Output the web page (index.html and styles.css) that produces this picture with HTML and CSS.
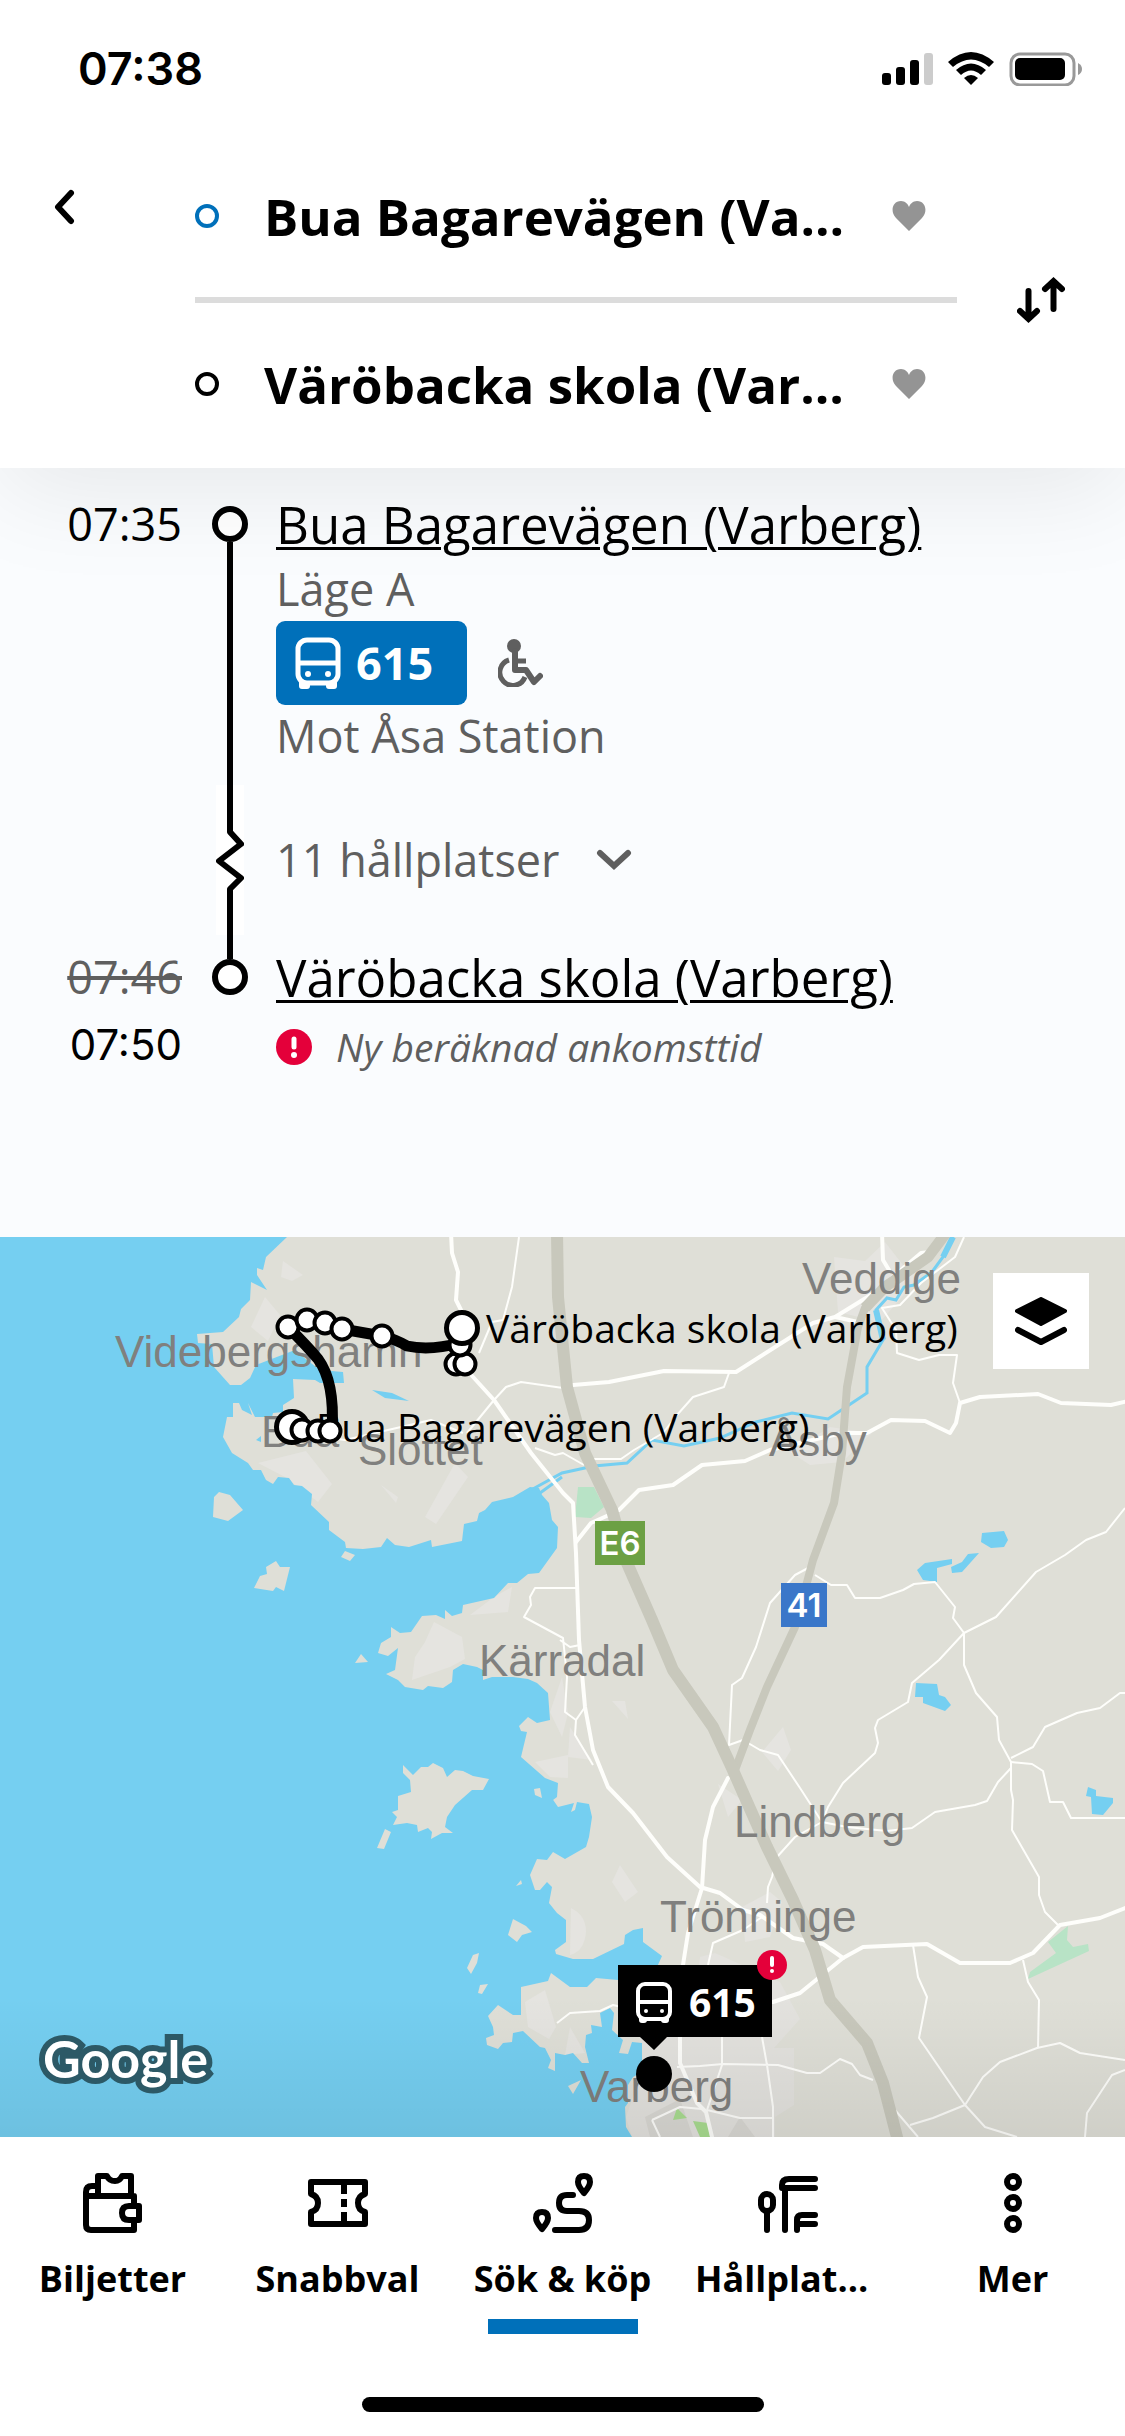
FILE: index.html
```
<!DOCTYPE html>
<html lang="sv">
<head>
    <meta charset="UTF-8">
    <meta name="viewport" content="width=device-width, initial-scale=1.0">
    <title>Sök &amp; köp</title>
    <link rel="stylesheet" href="styles.css">
</head>
<body>

    <div class="status-bar">
        <span class="clock">07:38</span>
        <svg width="200" height="34" viewBox="0 0 200 34">
            <rect x="0" y="21" width="9" height="12" rx="3"/>
            <rect x="14" y="15" width="9" height="18" rx="3"/>
            <rect x="28" y="8" width="9" height="25" rx="3"/>
            <rect x="42" y="1" width="9" height="32" rx="3" fill="#ccc"/>
            <path d="M66 10 L71 15 Q89 0 107 15 L112 10 Q89 -10 66 10 Z"/>
            <path d="M74 18 L79 23 Q89 14 99 23 L104 18 Q89 5 74 18 Z"/>
            <path d="M82 26 Q89 20 96 26 L89 33 Z"/>
            <rect x="129" y="2" width="63" height="31" rx="9" fill="none" stroke="#999" stroke-width="3"/>
            <rect x="133" y="6" width="50" height="22" rx="5"/>
            <path d="M196 11 Q200 13 200 17 Q200 21 196 23 Z" fill="#999"/>
        </svg>
    </div>

    <header class="search-header">
        <button class="back" aria-label="Tillbaka">
            <svg width="24" height="36" viewBox="0 0 24 36"><path d="M19 4 L6 18 L19 32" fill="none" stroke="#000" stroke-width="6" stroke-linecap="round" stroke-linejoin="round"/></svg>
        </button>
        <div class="places">
            <div class="place">
                <span class="dot dot-from"></span>
                <button class="place-name">Bua Bagarevägen (Varberg)</button>
                <button class="heart" aria-label="Spara från">
                    <svg width="34" height="30" viewBox="0 0 34 30"><path d="M17 30 L4 17 C-2 11 0 0 9 0 C13 0 16 3 17 6 C18 3 21 0 25 0 C34 0 36 11 30 17 Z"/></svg>
                </button>
            </div>
            <div class="divider"></div>
            <div class="place">
                <span class="dot"></span>
                <button class="place-name">Väröbacka skola (Varberg)</button>
                <button class="heart" aria-label="Spara till">
                    <svg width="34" height="30" viewBox="0 0 34 30"><path d="M17 30 L4 17 C-2 11 0 0 9 0 C13 0 16 3 17 6 C18 3 21 0 25 0 C34 0 36 11 30 17 Z"/></svg>
                </button>
            </div>
        </div>
        <button class="swap" aria-label="Byt riktning">
            <svg width="48" height="48" viewBox="0 0 48 48"><path d="M11.500 15 V42 M3 35 L11.500 43 L20 35 M36.500 33 V6 M28 13 L36.500 5 L45 13" fill="none" stroke="#000" stroke-width="6" stroke-linecap="round"/></svg>
        </button>
    </header>

    <main class="trip">
        <div class="leg">
            <div class="times"><span class="time">07:35</span></div>
            <div class="rail">
                <span class="ring ring-start"></span>
                <span class="line line-grow"></span>
                <svg class="zigzag" width="28" height="150" viewBox="0 0 28 150"><rect width="28" height="150" fill="#fff"/><path d="M14 0 V47 L25 59 L3 76 L25 93 L14 104 V150" fill="none" stroke="#000" stroke-width="6" stroke-linejoin="round"/></svg>
                <span class="line line-end"></span>
            </div>
            <div class="stop">
                <a class="stop-name" href="#">Bua Bagarevägen (Varberg)</a>
                <span class="platform">Läge A</span>
                <div class="ride">
                    <span class="bus-line">
                        <svg width="46" height="52" viewBox="0 0 46 52"><rect x="3" y="3" width="40" height="43" rx="9" fill="none" stroke="#fff" stroke-width="5"/><path d="M3 26 H43" stroke="#fff" stroke-width="5"/><circle cx="13" cy="37" r="3" fill="#fff"/><circle cx="33" cy="37" r="3" fill="#fff"/><path d="M4 44 H15 V49 Q15 52 12 52 H7 Q4 52 4 49 Z M31 44 H42 V49 Q42 52 39 52 H34 Q31 52 31 49 Z" fill="#fff"/></svg>
                        615
                    </span>
                    <svg width="45" height="48" viewBox="0 0 45 48" fill="none" stroke="#5f5f5f" stroke-width="5"><circle cx="16" cy="7" r="7" fill="#5f5f5f" stroke="none"/><path d="M17 12 V31 H28 L36 43 L42 37" stroke-width="6" stroke-linecap="round" stroke-linejoin="round"/><path d="M18 22 H28"/><path d="M11 21 A13 13 0 1 0 27 38"/></svg>
                </div>
                <span class="direction">Mot Åsa Station</span>
                <button class="stops-toggle">11 hållplatser
                    <svg width="36" height="22" viewBox="0 0 36 22"><path d="M4 4 L18 17 L32 4" fill="none" stroke="#5f5f5f" stroke-width="6" stroke-linecap="round"/></svg>
                </button>
            </div>
        </div>
        <div class="leg">
            <div class="times"><s class="time">07:46</s><span class="time-new">07:50</span></div>
            <div class="rail">
                <span class="line line-in"></span>
                <span class="ring"></span>
            </div>
            <div class="stop">
                <a class="stop-name" href="#">Väröbacka skola (Varberg)</a>
                <div class="notice">
                    <svg width="36" height="36" viewBox="0 0 36 36"><circle cx="18" cy="18" r="18" fill="#e4003a"/><path d="M18 10 V18" stroke="#fff" stroke-width="5" stroke-linecap="round"/><circle cx="18" cy="26" r="3" fill="#fff"/></svg>
                    <em>Ny beräknad ankomsttid</em>
                </div>
            </div>
        </div>
    </main>

    <section class="map">
        <svg class="map-canvas" viewBox="0 0 1125 900">
            <defs>
                <linearGradient id="fade" x1="0" y1="0" x2="0" y2="1">
                    <stop offset="0" stop-opacity="0"/>
                    <stop offset="1" stop-opacity="0.070"/>
                </linearGradient>
            </defs>
            <rect width="1125" height="900" fill="#dfdfd7"/>

            <!-- built-up areas -->
            <g fill="#e5e4e0">
                <path d="M283 24 L303 38 L292 44 L281 40 Z M265 60 L280 78 L268 104 L251 90 Z"/>
                <path d="M258 226 L306 214 L332 247 L318 265 L285 240 Z M455 226 L468 240 L436 287 L425 280 Z M381 248 L398 260 L396 266 Z"/>
                <path d="M834 20 L865 24 L885 5 L903 28 L925 34 L880 85 L838 75 Z M790 215 L830 190 L872 196 L842 225 L810 228 Z"/>
                <path d="M434 385 L462 400 L465 422 L450 430 L412 443 L415 420 L425 405 Z M494 360 L512 350 L508 375 L470 378 Z"/>
                <path d="M562 440 L550 475 L562 500 L568 476 Z M568 518 V541 L550 540 L535 525 Z M570 490 L592 523 L568 520 Z"/>
                <path d="M571 671 Q586 678 586 695 Q584 715 570 718 Z M620 628 L638 655 L625 665 L612 645 Z M612 464 H625 L628 482 Z"/>
                <path d="M783 490 L791 513 L778 534 L762 515 Z M718 547 L742 563 L728 580 Z M742 670 L770 655 L782 665 L770 700 L745 705 Z"/>
                <path d="M525 765 L545 753 L556 790 L549 802 L528 790 Z M570 790 L585 816 L565 818 Z"/>
            </g>
            <path d="M640 800 L690 790 L700 720 L715 716 L780 745 L800 782 L774 811 H794 V868 L775 880 V900 H632 L626 880 L640 840 Z" fill="#e3e2de"/>
            <path d="M645 880 L680 862 L693 900 H650 Z M740 880 L755 900 H728 Z" fill="#d9d8d3"/>

            <!-- parks -->
            <path d="M578 250 L594 250 L604 270 L591 281 L575 280 Z M1068 689 L1067 703 L1073 710 L1088 707 L1089 714 L1028 742 L1030 735 L1056 716 L1048 705 Z" fill="#b8e3c6"/>
            <path d="M677 871 L687 881 L673 883 Z M693 884 L708 886 L710 900 H700 Z" fill="#a9dc90"/>

            <!-- sea and lakes -->
            <g fill="#75cff1">
                <path d="M287 0 L266 20 L263 33 L257 31 V38 L267 53 L251 45 L250 63 L241 72 L239 80 L223 95 L197 97 L198 106 L212 107 L214 130 L230 148 H241 L250 141 L256 128 L295 113 L307 123 L320 133 L343 135 L344 146 H320 L315 143 L293 142 L294 161 L283 168 V175 L273 176 L272 180 H255 L248 166 L252 178 L242 173 L239 166 L233 166 V180 H227 L223 200 L232 216 L248 226 L253 233 H261 L266 243 L273 247 L278 240 L289 241 L294 248 L302 249 L312 257 L311 268 L329 285 V293 L345 305 L346 311 L363 312 L381 310 L387 301 L395 308 L409 310 L431 303 L432 310 L462 304 L464 287 L477 284 L479 276 L485 273 L492 265 L513 260 L530 250 L539 251 L542 258 L549 266 L552 283 L558 290 L557 311 L539 336 L528 337 L517 346 H508 L494 361 L463 368 L462 376 L452 379 L445 373 V382 L436 378 L422 379 L411 395 L400 396 L391 390 V400 L381 406 L378 416 L388 419 L398 411 L395 433 L386 437 L398 443 L405 450 L423 453 L428 449 L443 451 L452 445 L453 433 L463 427 L477 430 L483 433 V443 L492 440 H513 L528 442 L537 446 L548 456 L550 483 L537 486 L528 480 L519 489 L521 494 L527 495 L521 520 L545 541 L558 546 L557 560 L553 563 L545 551 L558 570 L574 566 L571 575 L575 573 L577 565 L589 567 L592 580 L589 600 L586 610 L565 622 L553 615 L547 623 L537 622 L530 638 L535 653 H540 L547 645 L552 650 L549 666 L557 676 L566 683 V705 L555 713 L556 717 L573 722 H593 L624 707 L625 698 L633 693 L643 691 V705 L662 719 L657 730 L618 743 L596 741 L587 750 H570 L551 736 L548 744 L521 750 V778 H513 L498 768 L488 779 L493 790 L494 798 L486 801 L487 808 L498 812 L503 806 L512 805 L513 796 L523 794 L540 810 L545 811 L551 823 L548 831 L555 834 V816 L565 818 L573 816 L582 826 H589 L585 810 L586 798 L592 796 L591 788 L602 790 L600 776 L610 771 L614 776 L612 793 L623 803 L619 816 L628 817 L632 805 L642 806 V835 L633 840 L628 848 V866 L625 870 L626 890 L632 900 H0 V0 Z"/>
                <path d="M982 296 L1004 294 L1008 303 L1004 310 L991 311 L981 305 Z M917 333 L925 326 L952 322 V327 L937 331 V345 L923 343 Z M951 330 L962 325 L968 317 L979 316 L971 325 L962 335 L952 336 Z"/>
                <path d="M916 446 L937 447 L939 458 L945 460 L951 468 L945 474 L923 466 V460 H915 Z M1088 550 L1096 553 V559 L1113 561 V566 L1103 578 L1092 577 L1091 560 L1086 559 Z M372 153 L392 156 L409 164 L385 161 Z M256 203 L261 199 V205 Z"/>
            </g>
            <path d="M953 0 L943 20 L932 35 L914 48 L904 50 L896 63 L887 61 L876 73 L880 90 L883 103 L867 130 V156 L849 168 L828 182 L792 176 L756 185 L720 201 L684 209 L652 203 L627 226 L594 229 L562 236 L531 253 M562 240 L540 256" fill="none" stroke="#75cff1" stroke-width="3"/>
            <path d="M953 0 L943 20 M876 73 L883 103" fill="none" stroke="#75cff1" stroke-width="6"/>

            <!-- islands -->
            <g fill="#dfdfd7">
                <path d="M214 260 L219 255 L230 258 L243 273 L228 284 L213 280 Z M254 351 L260 339 L267 337 L266 330 L276 324 L280 330 H290 L284 354 L276 350 L273 354 Z M341 320 L345 314 L355 318 L350 324 Z M355 426 L361 417 L368 425 Z"/>
                <path d="M403 528 L413 538 L421 530 H428 L433 526 L443 531 L447 540 L455 533 L463 534 L473 539 L489 542 L483 553 H472 L455 568 L447 580 L445 590 L453 596 H442 L431 602 L432 595 L428 591 L418 595 L417 588 L407 586 L393 588 L397 580 L392 575 L398 573 V559 L411 555 L410 543 L403 536 Z"/>
                <path d="M385 592 L391 595 L384 612 L377 611 Z M534 552 L540 551 L542 561 L535 558 Z M513 682 L526 689 L532 695 L522 698 L517 705 L508 698 Z M473 718 L479 716 L477 726 L471 737 L467 731 Z M480 748 L488 747 L482 757 L478 756 Z M568 849 L581 843 L573 857 Z M516 649 L521 643 L522 647 Z"/>
            </g>

            <!-- small roads -->
            <g fill="none" stroke="#fefefb" stroke-width="2" stroke-linejoin="round">
                <path d="M519 0 L512 50 L503 83 L492 85 L479 116 M467 196 L494 163 L506 150 L521 145 L563 151 M323 200 L345 203 L431 183 L463 196 M535 211 L555 218 L563 216 L584 228"/>
                <path d="M729 136 L724 150 L693 160 L677 178 L663 196 L634 213 L621 222 H590"/>
                <path d="M964 0 L955 20 L921 46 L900 68 L882 71 L896 93 L897 116 L919 123 L939 118 H957 L953 146 L960 166"/>
                <path d="M810 330 L795 338 L770 366 L756 410 L742 441 L732 448 L729 508 L743 503 L760 513 L778 518 L800 551 L822 585"/>
                <path d="M815 338 L831 348 H847 L855 361 H880 L903 353 L914 347 L935 345 L955 370 L953 381 L964 396 V428 L976 456 L997 480 L999 503 L1011 525 V553 L1013 563 L1012 593 L1039 640 V658 L1045 675 L1060 690"/>
                <path d="M1125 271 L1106 295 L1086 303 L1065 318 L1036 335 L996 380 L964 396 L939 423 L912 446 L908 465 L878 483 L875 491 L878 506 L875 516 L843 546 L828 570 L822 585"/>
                <path d="M767 666 L768 650 L772 640 L777 620 L795 600 L822 585 L847 590 L887 594 L912 591 L935 575 L975 568 L987 564 L998 545 L1011 531"/>
                <path d="M1011 521 L1033 510 L1045 490 L1077 476 L1100 471 L1120 456 H1125 M1011 525 L1032 527 L1043 534 L1050 565 H1063 L1071 581 H1125"/>
                <path d="M913 708 L918 740 L927 760 L919 801 L965 868 L985 890 L1017 900 M910 888 L933 881 L965 868 L983 840 L1000 825 L1037 811 L1060 806 L1080 816 L1125 823"/>
                <path d="M1023 723 L1028 745 L1039 763 L1038 811 M1125 833 L1112 838 L1087 876 L1085 900"/>
                <path d="M677 830 L700 829 L723 827 L778 828 L807 836 H820 L840 822 L852 827 L860 838 L873 843 M895 873 L918 900 M722 800 V828 L707 873 M762 800 L767 828 L773 870 V900 M707 873 L740 881 H773 M652 883 L680 870 L702 872 M652 883 L660 900"/>
                <path d="M708 728 L713 706 L743 693 L762 680 M557 786 L570 776 L600 774 L613 768 L630 772"/>
                <path d="M578 351 H535 L530 360 L531 368 L524 380 L563 401 L567 440 L565 475 L576 483 L585 470 M576 483 L575 498 L593 528 M560 403 L570 410 L580 408"/>
            </g>
            <!-- main roads -->
            <g fill="none" stroke="#fefefb" stroke-width="4" stroke-linejoin="round" stroke-linecap="round">
                <path d="M451 -4 L452 16 L458 35 L456 63 L461 73 L464 130 L494 163 L531 216 L563 256 L573 266 L576 316 L579 403 L585 470 L593 513 L608 550 L633 576 L667 620 L700 650 L720 656 L743 673 L760 678 L793 701 L823 707 L843 721"/>
                <path d="M728 541 L713 570 L705 603 L702 651 L688 696 L683 728 L680 800 V826 L697 866 L706 875 L713 904"/>
                <path d="M773 765 L800 756 L843 721 L863 710 L927 707 L960 726 H1010 L1033 716 L1060 688 L1100 681 L1128 670"/>
                <path d="M573 148 L609 145 L664 134 L736 135 L813 86 L835 80 L874 56 L921 16 L930 15 M882 -4 L883 23 L889 33 M835 80 L858 85 L870 62"/>
                <path d="M619 273 L639 253 L673 248 L702 228 L745 224 L770 213 L842 196 H867 L891 183 L925 184 L950 196 L956 186 L960 166 L980 160 L1038 157 L1061 166 L1111 168 L1128 164 M576 305 L591 286 L609 278"/>
            </g>
            <!-- highways -->
            <g fill="none" stroke="#c8c8bc" stroke-linejoin="round">
                <path d="M946 -4 L928 20 L885 50 L865 71 L858 90 L847 150 L842 216 L834 266 L813 323 L795 390 L767 450 L750 493 L735 533" stroke-width="8"/>
                <path d="M946 -4 L928 20 L885 50 L865 71" stroke-width="11"/>
                <path d="M557 -4 L558 60 L567 150 L585 216 L612 273 L627 326 L652 383 L673 433 L713 490 L732 531 L767 610 L793 663 L815 713 L830 763 L867 806 L883 846 L898 904" stroke-width="12"/>
            </g>

            <g class="town">
                <text x="115" y="130">Videbergshamn</text>
                <text x="261" y="210">Bua</text>
                <text x="358" y="228">Slottet</text>
                <text x="802" y="57">Veddige</text>
                <text x="769" y="219">Åsby</text>
                <text x="479" y="439">Kärradal</text>
                <text x="734" y="600">Lindberg</text>
                <text x="660" y="695">Trönninge</text>
                <text x="580" y="865">Varberg</text>
            </g>

            <rect x="595" y="284" width="50" height="44" fill="#6ca044"/>
            <text class="road-no" x="620" y="318">E6</text>
            <rect x="781" y="346" width="46" height="44" fill="#3a77c9"/>
            <text class="road-no" x="804" y="380">41</text>

            <rect y="760" width="1125" height="140" fill="url(#fade)"/>

            <!-- route with its stops -->
            <text class="route-label" x="486" y="106">Väröbacka skola (Varberg)</text>
            <text class="route-label" x="316" y="205">Bua Bagarevägen (Varberg)</text>
            <path d="M332 193 Q335 145 318 122 Q308 110 288 90 L307 83 L325 86 L342 92 L382 99 Q395 102 407 109 Q430 114 460 106 L465 127" fill="none" stroke="#000" stroke-width="11" stroke-linejoin="round"/>
            <g fill="#fff" stroke="#000" stroke-width="4">
                <circle cx="288" cy="90" r="10.500"/>
                <circle cx="307" cy="83" r="10.500"/>
                <circle cx="325" cy="86" r="10.500"/>
                <circle cx="342" cy="92" r="10.500"/>
                <circle cx="382" cy="99" r="10.500"/>
                <circle cx="456" cy="127" r="10.500"/>
                <circle cx="465" cy="127" r="10.500"/>
                <circle cx="460" cy="108" r="10.500"/>
                <circle cx="462" cy="91" r="15.500" stroke-width="5"/>
                <circle cx="292" cy="190" r="15.500" stroke-width="5"/>
                <circle cx="302" cy="193" r="10.500"/>
                <circle cx="318" cy="194" r="10.500"/>
                <circle cx="330" cy="194" r="10.500"/>
            </g>

            <!-- bus position -->
            <path d="M618 728 H772 V800 H667 L654 813 L640 800 H618 Z"/>
            <circle cx="654" cy="837" r="18"/>
            <g transform="translate(636 745)">
                <rect x="2" y="2" width="32" height="35" rx="7" fill="none" stroke="#fff" stroke-width="4"/>
                <path d="M2 20 H34" stroke="#fff" stroke-width="4"/>
                <path d="M3 35 H11 V38 Q11 41 8 41 H6 Q3 41 3 38 Z M25 35 H33 V38 Q33 41 30 41 H28 Q25 41 25 38 Z" fill="#fff"/>
                <circle cx="10" cy="29" r="2" fill="#fff"/>
                <circle cx="26" cy="29" r="2" fill="#fff"/>
            </g>
            <text class="bus-no" x="689" y="780">615</text>
            <circle cx="772" cy="728" r="15" fill="#e4003a"/>
            <path d="M772 721 V728" stroke="#fff" stroke-width="4" stroke-linecap="round"/>
            <circle cx="772" cy="734" r="2" fill="#fff"/>

            <text class="google" x="43" y="841">Google</text>
        </svg>
        <button class="layers" aria-label="Kartlager">
            <svg width="52" height="48" viewBox="0 0 52 48"><path d="M26 2 L50 14 L26 27 L2 14 Z" stroke="#000" stroke-width="4" stroke-linejoin="round"/><path d="M3 33 L26 45 L49 33" fill="none" stroke="#000" stroke-width="6" stroke-linecap="round" stroke-linejoin="round"/></svg>
        </button>
    </section>

    <nav class="tab-bar">
        <a class="tab" href="#">
            <svg width="60" height="60" viewBox="0 0 60 60"><path d="M15 22 V3 H24 Q26 8 32 8 Q37 8 39 3 H48 V22 M15 13 H9 Q3 13 3 19 V52 Q3 57 8 57 H51 V48 M3 23 H51 V33 M56 33 H46 Q39 33 39 40 Q39 47 46 47 H56 Z"/></svg>
            <span>Biljetter</span>
        </a>
        <a class="tab" href="#">
            <svg width="60" height="60" viewBox="0 0 60 60"><path d="M3 9 H57 V21 Q50 23 50 30 Q50 37 57 39 V51 H3 V39 Q10 37 10 30 Q10 23 3 21 Z M36 10 V21 M36 26 V34 M36 39 V50" stroke-linecap="butt"/></svg>
            <span>Snabbval</span>
        </a>
        <a class="tab active" href="#">
            <svg width="60" height="60" viewBox="0 0 60 60"><path d="M40 22 H34 Q26 22 26 30 Q26 38 34 38 H46 Q56 38 56 47 Q56 57 46 57 H22 M51 20 Q45 13 45 9 Q45 3 51 3 Q57 3 57 9 Q57 13 51 20 Z M9 56 Q3 49 3 45 Q3 39 9 39 Q15 39 15 45 Q15 49 9 56 Z"/></svg>
            <span>Sök &amp; köp</span>
        </a>
        <a class="tab" href="#">
            <svg width="60" height="60" viewBox="0 0 60 60"><path d="M9 38 V57 M27 16 V57 M57 6 H31 Q24 6 24 12 V15 H57 M39 57 V47 Q39 42 44 42 H57 M41 51 H57"/><rect x="3" y="21" width="12" height="17" rx="6"/></svg>
            <span>Hållplatser</span>
        </a>
        <a class="tab" href="#">
            <svg width="60" height="60" viewBox="0 0 60 60"><circle cx="30" cy="9" r="6"/><circle cx="30" cy="30" r="6"/><circle cx="30" cy="51" r="6"/></svg>
            <span>Mer</span>
        </a>
    </nav>
    <div class="home-indicator"></div>

</body>
</html>
```

FILE: styles.css
```
* {
    box-sizing: border-box;
}

body {
    margin: 0;
    background-color: #fff;
    color: #000;
    font-family: 'Open Sans', 'Noto Sans', sans-serif;
    font-size: 45px;
    line-height: 60px;
}

button {
    margin: 0;
    padding: 0;
    border: none;
    background: none;
    color: inherit;
    font: inherit;
    cursor: pointer;
}

svg {
    display: block;
    flex-shrink: 0;
}

.status-bar {
    display: flex;
    align-items: center;
    justify-content: space-between;
    padding: 39px 43px 36px 78px;
}

.clock {
    font-family: Inter, 'Liberation Sans', sans-serif;
    font-size: 45px;
    font-weight: 600;
}

.search-header {
    display: grid;
    grid-template-columns: 195px minmax(0, 1fr) 168px;
    position: relative;
    padding-bottom: 3px;
    background-color: #fff;
    box-shadow: 0 24px 96px rgba(0, 0, 0, 0.08);
    clip-path: inset(0 0 -200px 0);
}

.back {
    display: flex;
    align-items: center;
    align-self: start;
    height: 144px;
    padding-left: 52px;
}

.place {
    display: flex;
    align-items: center;
    gap: 45px;
    height: 162px;
    padding-right: 31px;
}

.dot {
    flex-shrink: 0;
    width: 24px;
    height: 24px;
    border: 4px solid #000;
    border-radius: 50%;
}

.dot-from {
    border-color: #0070ba;
}

.place-name {
    flex: 1;
    min-width: 0;
    overflow: hidden;
    text-overflow: ellipsis;
    white-space: nowrap;
    text-align: left;
    font-size: 51px;
    line-height: 72px;
    font-weight: 700;
}

.heart {
    fill: #949494;
}

.divider {
    height: 6px;
    background-color: #dcdcdc;
}

.swap {
    display: flex;
    align-items: center;
    justify-content: center;
}

.trip {
    padding: 23px 0 153px;
    background-color: #fafcfe;
}

.leg {
    display: grid;
    grid-template-columns: 184px 36px 1fr;
    column-gap: 28px;
}

.times {
    display: flex;
    flex-direction: column;
    align-items: flex-end;
    padding-right: 2px;
}

.time {
    line-height: 66px;
}

s.time {
    color: #5f5f5f;
}

.time-new {
    font-family: Inter, 'Liberation Sans', sans-serif;
    font-size: 42px;
    line-height: 70px;
}

.rail {
    display: flex;
    flex-direction: column;
    align-items: center;
}

.ring {
    width: 36px;
    height: 36px;
    border: 6px solid #000;
    border-radius: 50%;
    background-color: #fff;
}

.ring-start {
    margin-top: 15px;
}

.line {
    width: 6px;
    background-color: #000;
}

.line-grow {
    flex: 1;
}

.line-end {
    height: 9px;
}

.line-in {
    height: 15px;
}

.stop {
    display: flex;
    flex-direction: column;
    align-items: flex-start;
    color: #5f5f5f;
}

.stop-name {
    color: #000;
    font-size: 51px;
    line-height: 66px;
    text-decoration-thickness: 3px;
    text-underline-offset: 3px;
}

.platform {
    line-height: 64px;
}

.ride {
    display: flex;
    align-items: center;
    gap: 31px;
}

.bus-line {
    display: flex;
    align-items: center;
    gap: 15px;
    height: 84px;
    padding: 0 34px 0 19px;
    border-radius: 9px;
    background-color: #0070ba;
    color: #fff;
    font-weight: 700;
}

.direction {
    line-height: 62px;
}

.stops-toggle {
    display: flex;
    align-items: center;
    gap: 36px;
    margin: 63px 0 54px;
}

.notice {
    display: flex;
    align-items: center;
    gap: 24px;
    font-size: 39px;
    line-height: 74px;
}

.map {
    position: relative;
}

.map-canvas {
    width: 100%;
    height: auto;
}

.town {
    fill: #80807e;
    font-family: 'Liberation Sans', Arial, sans-serif;
    font-size: 44px;
}

.road-no {
    fill: #fff;
    font-family: Inter, 'Liberation Sans', sans-serif;
    font-size: 33px;
    font-weight: 600;
    text-anchor: middle;
}

.route-label {
    font-size: 39px;
}

.bus-no {
    fill: #fff;
    font-size: 39px;
    font-weight: 700;
}

.google {
    fill: #fff;
    stroke: #2c5966;
    stroke-width: 12px;
    paint-order: stroke;
    font-family: Lato, sans-serif;
    font-size: 52px;
    font-weight: 700;
}

.layers {
    display: flex;
    align-items: center;
    justify-content: center;
    position: absolute;
    top: 36px;
    right: 36px;
    width: 96px;
    height: 96px;
    background-color: #fff;
}

.tab-bar {
    display: flex;
    padding-top: 36px;
}

.tab {
    display: flex;
    flex: 1;
    flex-direction: column;
    align-items: center;
    min-width: 0;
    padding: 0 20px;
    color: #000;
    font-size: 36px;
    font-weight: 700;
    line-height: 48px;
    text-decoration: none;
}

.tab svg {
    fill: none;
    stroke: #000;
    stroke-width: 6px;
    stroke-linecap: round;
    stroke-linejoin: round;
}

.tab span {
    max-width: 100%;
    margin-top: 22px;
    overflow: hidden;
    text-overflow: ellipsis;
    white-space: nowrap;
}

.tab::after {
    content: '';
    width: 150px;
    height: 15px;
    margin-top: 16px;
}

.tab.active::after {
    background-color: #0070ba;
}

.home-indicator {
    width: 402px;
    height: 15px;
    margin: 63px auto 24px;
    border-radius: 8px;
    background-color: #000;
}
```
